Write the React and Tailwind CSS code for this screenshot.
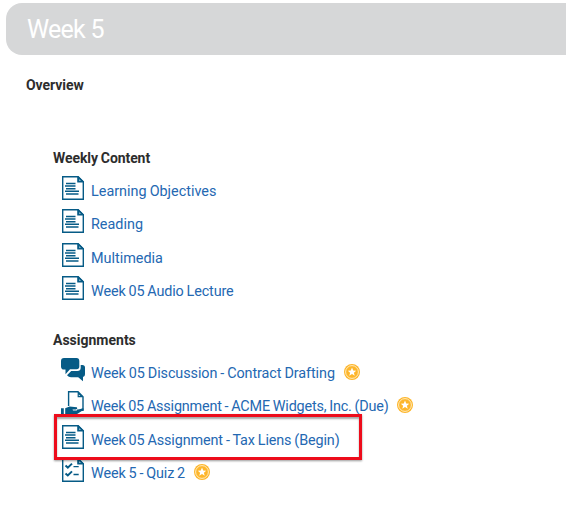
import React from "react";

function Sheet({ children }) {
  return (
    <svg width="22" height="24" viewBox="0 0 22 24" fill="none" stroke="#065b86" className="block">
      <path d="M.7 .7H16.2L21.3 5.8V23.3H.7Z" strokeWidth="1.4" />
      <path d="M15.8 .6V5.9H21.4Z" fill="#065b86" strokeWidth="1.1" />
      <path d="M17.3 3.2V4.7H18.8Z" fill="#fff" stroke="none" />
      {children}
    </svg>
  );
}

function DocIcon() {
  return (
    <Sheet>
      <path d="M4 7.5H13.5M3 10.1H13.5M4 12.7H13.5M3 15.3H17M4 17.9H16.5" strokeWidth="1.5" />
    </Sheet>
  );
}

function QuizIcon() {
  return (
    <Sheet>
      <path d="M3.5 7.6L5.8 9.6L10 5.6M3.5 15.4L5.8 17.4L10 13.4" strokeWidth="2" />
      <path d="M11.5 8.6H16.7M11.5 16.5H16.7" strokeWidth="1.3" />
    </Sheet>
  );
}

function DiscussionIcon() {
  return (
    <svg width="24" height="24" viewBox="0 0 24 24" fill="#065b86" className="block">
      <path d="M3 0H15.5Q18.3 0 18.3 3V8.5Q18.3 11.3 15.5 11.3H9L4.5 16.2V11.6H3Q0 11.6 0 8.5V3Q0 0 3 0Z" />
      <path d="M19.7 7H21.3Q24 7 24 9.5V16.3Q24 19 22 19V23.3L17.2 19.2H10Q7.7 19.2 6 17.2L10.2 13H16.3Q19.7 13 19.7 9.8Z" />
    </svg>
  );
}

function SubmitIcon() {
  return (
    <svg width="24" height="24" viewBox="0 0 24 24" className="block">
      <path d="M7.6 15V.8H17L22 5.8V19.2H16" fill="none" stroke="#065b86" strokeWidth="1.4" />
      <path d="M16.6 .5V6.2H22.3Z" fill="#065b86" />
      <path d="M17.8 3.5V5.1H19.4Z" fill="#fff" />
      <path d="M0 17.3H2.8V24H0ZM4.2 17.3L8.5 15.4L15.8 16.3Q17 18 15 18.4L11.5 18.6L12 19.6H15.5L21.5 17.3Q23.8 17.5 22 19.2L14.5 24H4.2Z" fill="#065b86" />
    </svg>
  );
}

function StarBadge() {
  return (
    <svg width="16" height="16" viewBox="0 0 16 16" className="block shrink-0">
      <circle cx="8" cy="8" r="8" fill="#fdb62b" />
      <circle cx="8" cy="8" r="6.4" fill="none" stroke="#fff0cf" strokeWidth=".9" />
      <path d="M8 3.6L9.2 6.6L12.2 6.8L9.9 8.8L10.7 11.8L8 10.1L5.3 11.8L6.1 8.8L3.8 6.8L6.8 6.6Z" fill="#fff" />
    </svg>
  );
}

function Row({ icon, label, tracking = "", starred }) {
  return (
    <li className="flex h-[33.33px] items-start">
      <span className="flex w-[30px] shrink-0 justify-center pr-[6px]">{icon}</span>
      <a className={`mt-[6px] text-[14.4px] leading-5 whitespace-nowrap text-[#2468b2] [word-spacing:-0.5px] ${tracking}`}>{label}</a>
      {starred && <span className="pt-[6px] pl-[9px]"><StarBadge /></span>}
    </li>
  );
}

export default function App() {
  return (
    <main className="relative h-[511px] w-[566px] overflow-hidden bg-white pt-[3px] font-[Roboto,sans-serif]">
      <header className="ml-[6px] flex h-[52px] items-center rounded-l-[16px] bg-[#d6d7d8] pt-[2px] pl-[21px]">
        <h1 className="text-[25px] leading-8 font-normal tracking-[-0.75px] text-white">Week 5</h1>
      </header>
      <h2 className="mt-5 ml-[26px] text-[14px] leading-5 font-bold tracking-[-0.05px] text-[#2d2d2d]">Overview</h2>
      <section className="mt-[53px] ml-[53px]">
        <h3 className="text-[14px] leading-5 font-bold tracking-[-0.08px] text-[#2d2d2d] [word-spacing:-0.5px]">Weekly Content</h3>
        <ul className="mt-[8px] ml-[8px]">
          <Row icon={<DocIcon />} label="Learning Objectives" />
          <Row icon={<DocIcon />} label="Reading" />
          <Row icon={<DocIcon />} label="Multimedia" />
          <Row icon={<DocIcon />} label="Week 05 Audio Lecture" tracking="tracking-[-0.14px]" />
        </ul>
      </section>
      <section className="mt-[20.7px] ml-[53px]">
        <h3 className="text-[14px] leading-5 font-bold text-[#2d2d2d]">Assignments</h3>
        <ul className="mt-[8px] ml-[8px]">
          <Row icon={<DiscussionIcon />} label="Week 05 Discussion - Contract Drafting" tracking="tracking-[-0.08px]" starred />
          <Row icon={<SubmitIcon />} label="Week 05 Assignment - ACME Widgets, Inc. (Due)" tracking="tracking-[-0.19px]" starred />
          <Row icon={<DocIcon />} label="Week 05 Assignment - Tax Liens (Begin)" tracking="tracking-[-0.12px]" />
          <Row icon={<QuizIcon />} label="Week 5 - Quiz 2" tracking="tracking-[-0.13px]" starred />
        </ul>
      </section>
      <div className="absolute top-[414px] left-[54px] h-[46px] w-[308px] border-[3px] border-[#ed0c1b] shadow-[0_1px_2px_rgba(0,0,0,0.4),inset_0_2px_2px_rgba(0,0,0,0.35)]" />
    </main>
  );
}
